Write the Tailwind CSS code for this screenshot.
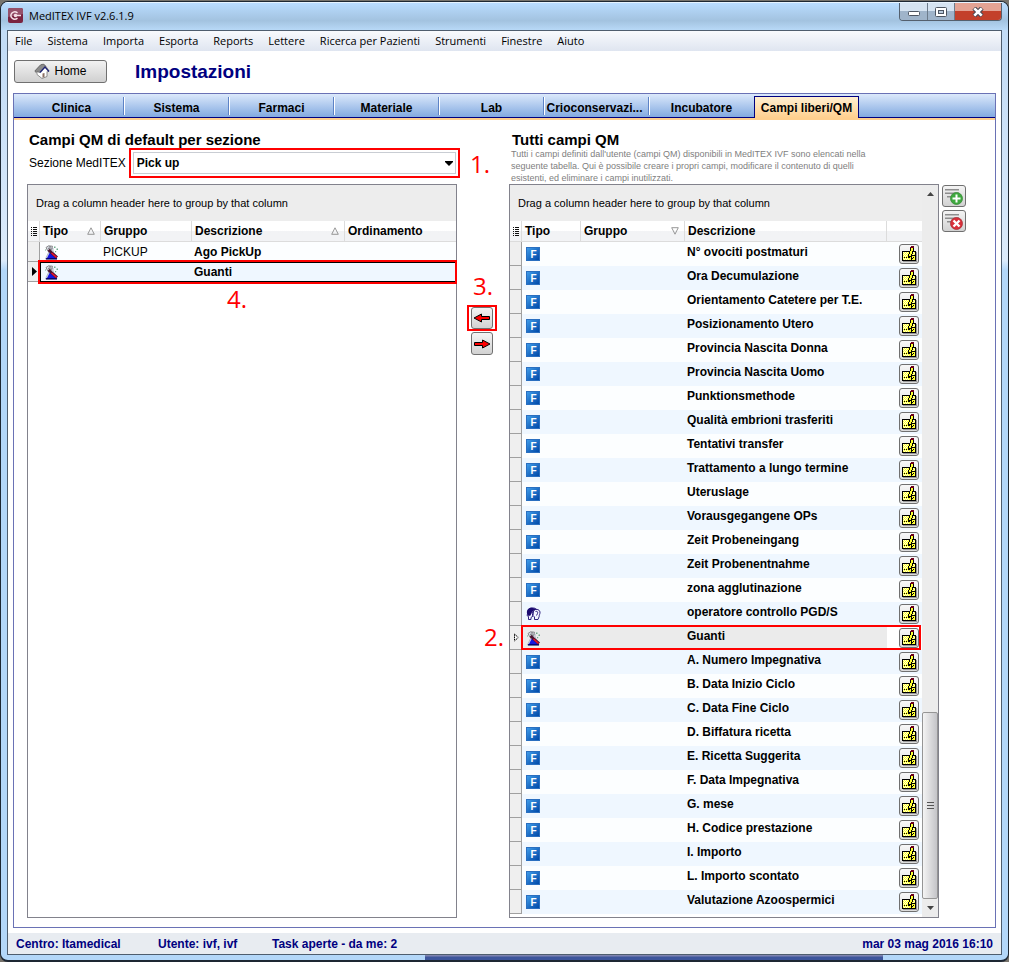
<!DOCTYPE html>
<html lang="it">

<head>
  <meta charset="UTF-8" />
  <meta name="viewport" content="width=device-width, initial-scale=1.0" />
  <title>MedITEX IVF v2.6.1.9</title>
  <script src="https://cdn.jsdelivr.net/npm/@tailwindcss/browser@4"></script>
</head>

<body class="min-h-screen flex flex-col bg-[#77736c] font-['Liberation_Sans',Arial,sans-serif] text-xs text-black">

  <!-- Icon sprites -->
  <svg class="hidden">
    <symbol id="i-flask" viewBox="0 0 15 15">
      <path d="M4 3h5v3l4 8H1.500L5 6.500z" fill="#dfe4f0" stroke="#8a90a0" stroke-width="0.600" />
      <path d="M5.500 8h4l3 6H2.500z" fill="#1414e0" />
      <path d="M2 13.800h11" stroke="#000068" stroke-width="1.400" />
      <path d="M2 2.500L4.500.8l4 .4-1 3.300-4 1z" fill="#d4d8e2" stroke="#666" stroke-width="0.700" />
      <path d="M4 3l3.500 2.500M6 1v3" stroke="#555" stroke-width="0.700" />
      <path d="M4.500 5l8.500 7.500" stroke="#4a1430" stroke-width="3" />
      <path d="M7.500 8l5 4.300" stroke="#e8102c" stroke-width="1.600" />
      <path d="M10 1.500h1.500V3H10zM12.500 3.500H14V5h-1.500zM11 6h1.200v1.200H11zM1 4.500h1v1H1z" fill="#6fa98a" />
    </symbol>
    <symbol id="i-faces" viewBox="0 0 15 14">
      <path d="M2.500 12.500V9.500L1 8.500l1-3C2 2 4 .8 7 1c2 0 3.500.8 4 2L7.500 4 6 6l1 3-2 1.500v2z" fill="#f4f4ff" stroke="#1c0a70" stroke-width="0.900" />
      <path d="M1 6.500C.3 2.500 3 .6 6.500.9c2 0 3.500.9 4 2L7 4 5.500 6 4.500 8.500 2.500 9z" fill="#1c0a70" />
      <path d="M7.500 4C9 1.500 13.500 2 14 5c.2 2-1 3-.8 4.500L12 12.500H8.500V10L7 8.500z" fill="#f4f4ff" stroke="#1c0a70" stroke-width="0.900" />
      <path d="M9.500 4.500c2-.6 2.500.7 2 2l-1 2" fill="none" stroke="#1c0a70" stroke-width="0.900" />
    </symbol>
    <symbol id="i-note" viewBox="0 0 16 16" shape-rendering="crispEdges">
      <path d="M2 15h14v1H2zM15 6h1v10h-1z" fill="#9a9a9a" />
      <path d="M1 5h14v10H1z" fill="#000" />
      <path d="M2 6h12v8H2z" fill="#ffff33" />
      <path d="M2 6h1v1H2zM4 6h1v1H4zM6 6h1v1H6zM3 7h1v1H3zM5 7h1v1H5zM2 8h1v1H2zM4 8h1v1H4zM6 8h1v1H6zM3 9h1v1H3zM5 9h1v1H5zM2 10h1v1H2zM4 10h1v1H4zM2 12h1v1H2zM4 12h1v1H4zM6 12h1v1H6zM3 13h1v1H3zM5 13h1v1H5zM7 13h1v1H7zM12 6h1v1h-1zM13 7h1v1h-1zM12 8h1v1h-1z" fill="#ffffd8" />
      <path d="M3 11h1v1H3zM5 11h1v1H5zM7 11h2v1H7z" fill="#000" />
      <path d="M9 2h4v3h-1v3h-1v3H9v1H7V8h1V5h1z" fill="#000" />
      <path d="M10 2h2v3h-2zM9 5h2v3H9zM8 8h2v2H8z" fill="#ffff33" />
      <path d="M10 0h3v2h-3zM9 1h4v1H9z" fill="#6d0018" />
      <path d="M10 9h5v6h-5z" fill="#000" />
      <path d="M11 10h3v4h-3z" fill="#ffff33" />
      <path d="M12 11h1v1h-1zM11 12h1v1h-1z" fill="#000" />
    </symbol>
    <symbol id="i-list" viewBox="0 0 6 9" shape-rendering="crispEdges">
      <path d="M0 0h1v1H0zM2 0h4v1H2zM0 2h1v1H0zM2 2h4v1H2zM0 4h1v1H0zM2 4h4v1H2zM0 6h1v1H0zM2 6h4v1H2zM0 8h1v1H0zM2 8h4v1H2z" fill="#111" />
    </symbol>
    <symbol id="i-asc" viewBox="0 0 8 8">
      <path d="M4 .8L7.300 7.300H.7z" fill="none" stroke="#8c8c8c" stroke-width="0.900" />
    </symbol>
    <symbol id="i-desc" viewBox="0 0 8 8">
      <path d="M4 7.200L.7.700h6.600z" fill="none" stroke="#8c8c8c" stroke-width="0.900" />
    </symbol>
    <symbol id="i-arrow" viewBox="0 0 18 12">
      <path d="M1 6l7.500-4v2.500H16.500v3H8.500V10z" fill="#f00" stroke="#000" stroke-width="1" />
    </symbol>
    <symbol id="i-lines" viewBox="0 0 20 18">
      <path d="M1 1h14v1.500H1zM1 4.500h14V6H1zM3 8h8v1.500H3z" fill="#8d8d8d" />
    </symbol>
  </svg>

  <!-- Window frame -->
  <div class="flex-1 flex flex-col mt-px border border-b-2 border-[#1d2733] rounded-lg px-[6px] overflow-hidden bg-linear-to-b from-[#c3dcf6] from-5% via-[#dcebfb] via-27% to-[#b3d7f9] to-28%">

    <!-- Title bar -->
    <header class="h-7 flex items-start -mx-[6px] pl-[7px] pr-[6px] border-t border-[#e6f3ff] bg-linear-to-b from-[#b9dcff] via-[#a3c3e0] via-65% to-[#b8d9f7]">
      <svg class="w-[15px] h-[15px] mt-[5px]" viewBox="0 0 15 15">
        <rect width="15" height="15" rx="2" fill="#7a2340" />
        <path d="M0 2a2 2 0 0 1 2-2h11a2 2 0 0 1 2 2v4L0 9z" fill="#95506a" />
        <path d="M9.500 4.800A4 3.600 0 1 0 9.500 10.200M6 7.500H13" fill="none" stroke="#f5dfe6" stroke-width="1.500" />
        <circle cx="7.500" cy="7.500" r="1.700" fill="#f5dfe6" />
      </svg>
      <h1 class="ml-[6px] pt-[5px] leading-4 text-[11px] font-['Open_Sans',sans-serif]">MedITEX IVF v2.6.1.9</h1>
      <div class="ml-auto flex h-[18px] rounded-b-[4px] border border-t-0 border-[#54606e] overflow-hidden">
        <button aria-label="Riduci" class="w-[28px] flex items-center justify-center pt-1 border-r border-[#6c7b8b] bg-linear-to-b from-[#d5e3f1] from-45% to-[#9fb4ca] to-50%">
          <svg class="w-3 h-[6px]" viewBox="0 0 12 6"><rect x=".5" y=".5" width="11" height="4" rx="1" fill="#fff" stroke="#4d5561" /></svg>
        </button>
        <button aria-label="Ingrandisci" class="w-[27px] flex items-center justify-center border-r border-[#6c7b8b] bg-linear-to-b from-[#d5e3f1] from-45% to-[#9fb4ca] to-50%">
          <svg class="w-3 h-[10px]" viewBox="0 0 12 10"><rect x=".5" y=".5" width="11" height="9" rx="1" fill="#fff" stroke="#4d5561" /><rect x="3.500" y="3.500" width="5" height="3" fill="#b8c9db" stroke="#4d5561" /></svg>
        </button>
        <button aria-label="Chiudi" class="w-[46px] flex items-center justify-center bg-linear-to-b from-[#e3a394] from-45% to-[#c3402a] to-50%">
          <svg class="w-3 h-[10px]" viewBox="0 0 12 10"><path d="M2 1l8 8M10 1L2 9" stroke="#4a4a55" stroke-width="4.600" /><path d="M2.300 1.300l7.400 7.400M9.700 1.300L2.300 8.700" stroke="#fff" stroke-width="2.600" /></svg>
        </button>
      </div>
    </header>

    <main class="flex-1 flex flex-col border border-[#4e5d6e] bg-white">

      <!-- Menu -->
      <nav class="h-5 shrink-0 flex items-center gap-[15px] pl-[7px] whitespace-nowrap text-[11px] font-['Open_Sans',sans-serif] bg-linear-to-b from-[#f8fafd] to-[#dfe5f0]">
        <a href="#">File</a>
        <a href="#">Sistema</a>
        <a href="#">Importa</a>
        <a href="#">Esporta</a>
        <a href="#">Reports</a>
        <a href="#">Lettere</a>
        <a href="#">Ricerca per Pazienti</a>
        <a href="#">Strumenti</a>
        <a href="#">Finestre</a>
        <a href="#">Aiuto</a>
      </nav>

      <!-- Toolbar -->
      <div class="h-[42px] shrink-0 flex items-center pl-[6px]">
        <button class="w-[93px] h-[23px] mb-[2px] flex items-center justify-center gap-1 border border-[#707070] rounded-[3px] bg-linear-to-b from-[#f2f2f2] to-[#d0d0d0]">
          <svg class="w-4 h-4" viewBox="0 0 16 16">
            <path d="M1 8L7 1.500l4 .5 4 6-1 1-1-.5v5l-5 2-5-4V8.500z" fill="#fff" stroke="#777" stroke-width=".8" />
            <path d="M.8 8L6.500 2l3-1 2 2.500L5.500 9.500 3 8.500 2 9.500z" fill="#8b8b8b" stroke="#555" stroke-width=".6" />
            <path d="M6 9.500l5-5.500 4 4.500" fill="none" stroke="#1e2272" stroke-width="1.300" />
            <path d="M8.500 10.500l2-.6v4l-2 .8z" fill="#8a6f62" />
          </svg>
          Home
        </button>
        <h2 class="ml-7 text-[19px] font-bold text-[#000080]">Impostazioni</h2>
      </div>

      <!-- Tabs panel -->
      <section class="flex-1 flex flex-col mx-[5px] border border-[#6a72b5]">
        <div role="tablist" class="h-6 shrink-0 flex items-end pl-[6px] font-bold border-b border-[#000080] bg-linear-to-b from-[#dce9fb] to-[#83aae0]">
          <button role="tab" class="w-[103px] h-[19px]">Clinica</button>
          <span class="w-[2px] h-[18px] mb-[2px] border-l border-[#5d83c6] bg-white"></span>
          <button role="tab" class="w-[103px] h-[19px]">Sistema</button>
          <span class="w-[2px] h-[18px] mb-[2px] border-l border-[#5d83c6] bg-white"></span>
          <button role="tab" class="w-[103px] h-[19px]">Farmaci</button>
          <span class="w-[2px] h-[18px] mb-[2px] border-l border-[#5d83c6] bg-white"></span>
          <button role="tab" class="w-[103px] h-[19px]">Materiale</button>
          <span class="w-[2px] h-[18px] mb-[2px] border-l border-[#5d83c6] bg-white"></span>
          <button role="tab" class="w-[103px] h-[19px]">Lab</button>
          <span class="w-[2px] h-[18px] mb-[2px] border-l border-[#5d83c6] bg-white"></span>
          <button role="tab" class="w-[103px] h-[19px] pr-1 whitespace-nowrap">Crioconservazi...</button>
          <span class="w-[2px] h-[18px] mb-[2px] border-l border-[#5d83c6] bg-white"></span>
          <button role="tab" class="w-[103px] h-[19px]">Incubatore</button>
          <button role="tab" aria-selected="true" class="w-[105px] h-[22px] ml-px -mb-px border border-b-0 border-[#000080] whitespace-nowrap bg-linear-to-b from-[#ffefd0] to-[#ffcf8e]">Campi liberi/QM</button>
        </div>
        <div class="h-[2px] shrink-0 bg-[#ffcf8e]"></div>

        <div class="flex-1 flex pl-[13px] pr-[29px] pb-[9px]">

          <!-- Default fields -->
          <div class="flex-1 min-w-0 flex flex-col">
            <div class="h-16 pt-3 pl-[2px]">
              <h3 class="text-[15px] leading-4 font-bold whitespace-nowrap">Campi QM di default per sezione</h3>
              <div class="flex items-center gap-[3px] -mr-[3px]">
                <label for="sezione" class="whitespace-nowrap">Sezione MedITEX</label>
                <div class="relative flex-1 h-[30px] p-[2px] border-2 border-[#f00]">
                  <select id="sezione" class="appearance-none w-full h-[22px] pl-[3px] font-bold border border-[#c9cdd3] bg-white">
                    <option>Pick up</option>
                  </select>
                  <svg class="absolute right-[5px] top-[11px] w-2 h-[5px]" viewBox="0 0 8 5"><path d="M0 0h8v1L4 5 0 1z" /></svg>
                </div>
              </div>
            </div>

            <div class="flex-1 border border-[#82828c]">
              <div class="h-9 flex items-center pl-2 text-[11px] bg-[#ededed]">Drag a column header here to group by that column</div>
              <table class="w-full table-fixed border-separate border-spacing-0 text-left">
                <colgroup>
                  <col class="w-3" />
                  <col class="w-[61px]" />
                  <col class="w-[91px]" />
                  <col class="w-[153px]" />
                  <col />
                </colgroup>
                <thead>
                  <tr class="h-[21px] bg-linear-to-b from-white from-45% to-[#f2f3f5] to-50%">
                    <th class="p-0 border-r border-b border-[#dcdcdc]"><svg class="w-[6px] h-[9px] ml-[3px]"><use href="#i-list" /></svg></th>
                    <th class="p-0 border-r border-b border-[#dcdcdc]"><div class="flex items-center justify-between pl-[3px] pr-[5px]">Tipo<svg class="w-2 h-2"><use href="#i-asc" /></svg></div></th>
                    <th class="p-0 pl-[3px] border-r border-b border-[#dcdcdc]">Gruppo</th>
                    <th class="p-0 border-r border-b border-[#dcdcdc]"><div class="flex items-center justify-between pl-[3px] pr-[5px]">Descrizione<svg class="w-2 h-2"><use href="#i-asc" /></svg></div></th>
                    <th class="p-0 pl-[3px] border-b border-[#dcdcdc]">Ordinamento</th>
                  </tr>
                </thead>
                <tbody>
                  <tr class="h-5 bg-[#fcfeff]">
                    <td class="p-0 bg-[#efefef] border-r border-b border-[#a0a0a0]"></td>
                    <td class="p-0 pl-1"><svg class="w-[15px] h-[15px]"><use href="#i-flask" /></svg></td>
                    <td class="p-0 pl-[2px]">PICKUP</td>
                    <td class="p-0 pl-[2px] font-bold">Ago PickUp</td>
                    <td class="p-0"></td>
                  </tr>
                  <tr class="relative h-5 bg-[#eff7ff]">
                    <td class="p-0 bg-[#efefef] border-r border-b border-[#a0a0a0]"><svg class="w-[5px] h-[9px] ml-1" viewBox="0 0 5 9"><path d="M0 0l5 4.500L0 9z" /></svg></td>
                    <td class="p-0 pl-1"><svg class="w-[15px] h-[15px]"><use href="#i-flask" /></svg></td>
                    <td class="p-0"></td>
                    <td class="p-0 pl-[2px] font-bold">Guanti</td>
                    <td class="p-0">
                      <div class="absolute left-[10px] -right-px -top-[2px] h-6 border-2 border-[#f00]"><div class="h-full border border-r-0 border-black"></div></div>
                      <div class="absolute left-[199px] top-[21px] leading-8 text-2xl text-[#f00] font-['Open_Sans',sans-serif]">4.</div>
                    </td>
                  </tr>
                </tbody>
              </table>
            </div>
          </div>

          <!-- Move buttons -->
          <div class="relative w-[52px] shrink-0 flex flex-col items-center pt-[185px] pr-[2px] text-2xl leading-8 text-[#f00] font-['Open_Sans',sans-serif]">
            <span class="absolute left-[13px] top-7">1.</span>
            <span class="absolute left-[16px] top-[150px]">3.</span>
            <span class="absolute left-[27px] top-[501px]">2.</span>
            <div class="w-[30px] h-[26px] flex items-center justify-center border-2 border-[#f00]">
              <button aria-label="Aggiungi alla sezione" class="w-[22px] h-[22px] flex items-center justify-center border border-[#707070] rounded-[3px] bg-linear-to-b from-[#f4f4f4] to-[#d2d2d2]">
                <svg class="w-[18px] h-3 shrink-0"><use href="#i-arrow" /></svg>
              </button>
            </div>
            <button aria-label="Rimuovi dalla sezione" class="mt-px w-[22px] h-[23px] flex items-center justify-center border border-[#707070] rounded-[3px] bg-linear-to-b from-[#f4f4f4] to-[#d2d2d2]">
              <svg class="w-[18px] h-3 shrink-0 rotate-180"><use href="#i-arrow" /></svg>
            </button>
          </div>

          <!-- All fields -->
          <div class="flex-1 min-w-0 flex flex-col">
            <div class="h-16 pt-3 pl-[2px] whitespace-nowrap">
              <h3 class="pl-px text-[15px] leading-4 font-bold">Tutti campi QM</h3>
              <p class="text-[9px] leading-3 text-[#808080]">Tutti i campi definiti dall'utente (campi QM) disponibili in MedITEX IVF sono elencati nella<br />seguente tabella. Qui è possibile creare i propri campi, modificare il contenuto di quelli<br />esistenti, ed eliminare i campi inutilizzati.</p>
            </div>

            <div class="flex-1 flex border border-[#82828c]">
              <div class="flex-1 min-w-0">
                <div class="h-9 flex items-center pl-2 text-[11px] bg-[#ededed]">Drag a column header here to group by that column</div>
                <table class="w-full table-fixed border-separate border-spacing-0 text-left">
                  <colgroup>
                    <col class="w-3" />
                    <col class="w-[59px]" />
                    <col class="w-[104px]" />
                    <col />
                    <col class="w-[35px]" />
                  </colgroup>
                  <thead>
                    <tr class="h-[21px] bg-linear-to-b from-white from-45% to-[#f2f3f5] to-50%">
                      <th class="p-0 border-r border-b border-[#dcdcdc]"><svg class="w-[6px] h-[9px] ml-[3px]"><use href="#i-list" /></svg></th>
                      <th class="p-0 pl-[3px] border-r border-b border-[#dcdcdc]">Tipo</th>
                      <th class="p-0 border-r border-b border-[#dcdcdc]"><div class="flex items-center justify-between pl-[3px] pr-[5px]">Gruppo<svg class="w-2 h-2"><use href="#i-desc" /></svg></div></th>
                      <th class="p-0 pl-[3px] border-r border-b border-[#dcdcdc]">Descrizione</th>
                      <th class="p-0 border-b border-[#dcdcdc]"></th>
                    </tr>
                  </thead>
                  <tbody id="fields"></tbody>
                </table>
              </div>

              <!-- Scrollbar -->
              <div class="w-4 shrink-0 flex flex-col items-center bg-[#ececec]">
                <svg class="w-[7px] h-4 shrink-0" viewBox="0 0 7 16"><path d="M0 11l3.500-4L7 11z" fill="#444" /></svg>
                <div class="flex-1"></div>
                <div class="w-4 h-[187px] flex items-center justify-center border border-[#959595] rounded-[2px] bg-linear-to-r from-[#f4f4f4] to-[#c4c4c8]">
                  <svg class="w-[7px] h-2" viewBox="0 0 7 8" shape-rendering="crispEdges"><path d="M0 0h7v1H0zM0 3h7v1H0zM0 6h7v1H0z" fill="#555" /></svg>
                </div>
                <svg class="w-[7px] h-[18px] shrink-0" viewBox="0 0 7 18"><path d="M0 7h7l-3.500 4z" fill="#444" /></svg>
              </div>
            </div>
          </div>

          <!-- Add / delete -->
          <div class="w-[27px] shrink-0 flex flex-col items-end gap-[3px] pt-[65px]">
            <button aria-label="Nuovo campo" class="relative w-6 h-[22px] border border-[#707070] rounded-[3px] bg-linear-to-b from-[#f4f4f4] to-[#d2d2d2]">
              <svg class="absolute left-px top-[2px] w-5 h-[18px]" viewBox="0 0 20 18"><use href="#i-lines" width="20" height="18" /><circle cx="12.500" cy="10.500" r="6" fill="#3fa93f" stroke="#3a8a3a" stroke-width=".8" /><path d="M12.500 6.500v8M8.500 10.500h8" stroke="#fff" stroke-width="2" /></svg>
            </button>
            <button aria-label="Elimina campo" class="relative w-6 h-[22px] border border-[#707070] rounded-[3px] bg-linear-to-b from-[#f4f4f4] to-[#d2d2d2]">
              <svg class="absolute left-px top-[2px] w-5 h-[18px]" viewBox="0 0 20 18"><use href="#i-lines" width="20" height="18" /><circle cx="12.500" cy="10.500" r="6" fill="#d9303a" stroke="#a83038" stroke-width=".8" /><path d="M9.500 7.500l6 6M15.500 7.500l-6 6" stroke="#fff" stroke-width="2.400" /></svg>
            </button>
          </div>
        </div>
      </section>

      <!-- Status bar -->
      <footer class="mt-[5px] h-[21px] shrink-0 flex items-center pl-2 pr-2 font-bold text-[#000080] bg-[#e8ecf1] whitespace-nowrap">
        <span class="w-[142px]">Centro: Itamedical</span>
        <span class="w-[114px]">Utente: ivf, ivf</span>
        <span>Task aperte - da me: 2</span>
        <span class="ml-auto">mar 03 mag 2016 16:10</span>
      </footer>
    </main>
    <div class="h-[5px] shrink-0 flex">
      <div class="w-[42%]"></div>
      <div class="w-[46%] bg-linear-to-b from-[#8f8fb5] to-[#3d559c] to-50%"></div>
    </div>
  </div>

  <script>
    const fields = [
      'N° ovociti postmaturi', 'Ora Decumulazione', 'Orientamento Catetere per T.E.', 'Posizionamento Utero',
      'Provincia Nascita Donna', 'Provincia Nascita Uomo', 'Punktionsmethode', 'Qualità embrioni trasferiti',
      'Tentativi transfer', 'Trattamento a lungo termine', 'Uteruslage', 'Vorausgegangene OPs',
      'Zeit Probeneingang', 'Zeit Probenentnahme', 'zona agglutinazione', 'operatore controllo PGD/S',
      'Guanti', 'A. Numero Impegnativa', 'B. Data Inizio Ciclo', 'C. Data Fine Ciclo', 'D. Biffatura ricetta',
      'E. Ricetta Suggerita', 'F. Data Impegnativa', 'G. mese', 'H. Codice prestazione', 'I. Importo',
      'L. Importo scontato', 'Valutazione Azoospermici'
    ];

    const iconF = '<div class="w-[14px] h-[14px] pl-px text-center text-[10px] leading-[13px] font-bold text-white border border-[#2a6fc0] bg-linear-to-br from-[#3f9be8] to-[#0048a8]">F</div>';
    const iconFlask = '<svg class="w-[15px] h-[15px]"><use href="#i-flask" /></svg>';
    const iconFaces = '<svg class="w-[15px] h-[14px]"><use href="#i-faces" /></svg>';

    document.getElementById('fields').innerHTML = fields.map((name, i) => {
      const selected = name === 'Guanti';
      const icon = selected ? iconFlask : name.startsWith('operatore') ? iconFaces : iconF;
      const bg = selected ? 'bg-[#ebebeb]' : i % 2 ? 'bg-[#eff7ff]' : 'bg-[#fcfeff]';
      return `
        <tr class="relative h-6 ${bg}">
          <td class="p-0 bg-[#efefef] border-r border-b border-[#a0a0a0]">
            ${selected ? '<svg class="w-[5px] h-[9px] ml-1" viewBox="0 0 5 9"><path d="M.5 1l3.700 3.500L.5 8z" fill="#fff" stroke="#000" stroke-dasharray="1.500 .7" /></svg>' : ''}
          </td>
          <td class="p-0 pl-1">${icon}</td>
          <td class="p-0"></td>
          <td class="p-0 pl-[2px] align-top leading-5 font-bold whitespace-nowrap">${name}</td>
          <td class="p-0 ${selected ? 'bg-white' : ''}">
            <button aria-label="Modifica ${name}" class="w-5 h-5 ml-3 flex items-center justify-center border border-[#707070] rounded-[3px] bg-linear-to-b from-[#f8f8f8] to-[#dcdcdc]">
              <svg class="w-4 h-4"><use href="#i-note" /></svg>
            </button>
            ${selected ? '<div class="absolute left-[11px] right-px -top-px h-[25px] border-2 border-[#f00]"></div>' : ''}
          </td>
        </tr>`;
    }).join('');
  </script>

</body>

</html>
